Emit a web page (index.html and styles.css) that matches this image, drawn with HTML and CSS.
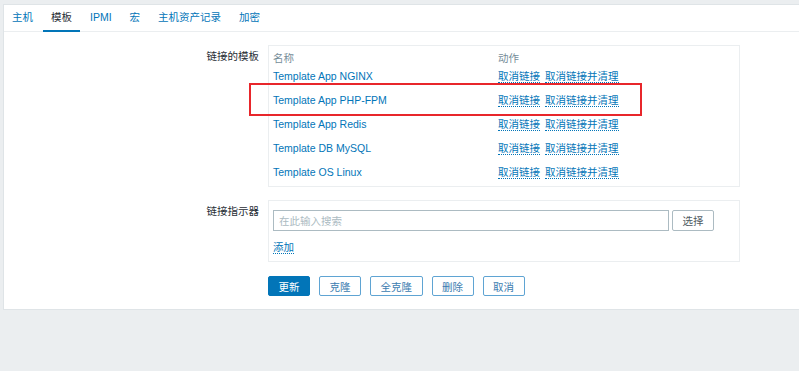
FILE: index.html
```html
<!DOCTYPE html>
<html lang="zh-CN">
<head>
    <meta charset="UTF-8">
    <title>主机 - 模板</title>
    <link rel="stylesheet" href="styles.css">
</head>
<body>

<div class="panel">
    <ul class="tabs">
        <li class="tab">主机</li>
        <li class="tab active">模板</li>
        <li class="tab">IPMI</li>
        <li class="tab">宏</li>
        <li class="tab">主机资产记录</li>
        <li class="tab">加密</li>
    </ul>

    <div class="form">
        <div class="form-label">链接的模板</div>
        <div class="form-box templates">
            <div class="trow thead">
                <span class="col-name">名称</span>
                <span class="col-action">动作</span>
            </div>
            <div class="trow">
                <a class="col-name link">Template App NGINX</a>
                <span class="col-action"><a class="action">取消链接</a><a class="action">取消链接并清理</a></span>
            </div>
            <div class="trow">
                <a class="col-name link">Template App PHP-FPM</a>
                <span class="col-action"><a class="action">取消链接</a><a class="action">取消链接并清理</a></span>
            </div>
            <div class="trow">
                <a class="col-name link">Template App Redis</a>
                <span class="col-action"><a class="action">取消链接</a><a class="action">取消链接并清理</a></span>
            </div>
            <div class="trow">
                <a class="col-name link">Template DB MySQL</a>
                <span class="col-action"><a class="action">取消链接</a><a class="action">取消链接并清理</a></span>
            </div>
            <div class="trow">
                <a class="col-name link">Template OS Linux</a>
                <span class="col-action"><a class="action">取消链接</a><a class="action">取消链接并清理</a></span>
            </div>
            <!-- highlight around the PHP-FPM row -->
            <div class="highlight"></div>
        </div>

        <div class="form-label">链接指示器</div>
        <div class="form-box linker">
            <div class="search-row">
                <input class="search" type="text" placeholder="在此输入搜索">
                <button class="btn-grey">选择</button>
            </div>
            <a class="action add">添加</a>
        </div>

        <div></div>
        <div class="buttons">
            <button class="btn primary">更新</button>
            <button class="btn">克隆</button>
            <button class="btn">全克隆</button>
            <button class="btn">删除</button>
            <button class="btn">取消</button>
        </div>
    </div>
</div>

</body>
</html>
```

FILE: styles.css
```css
body {
    margin: 0;
    padding: 4px 0 0 3px;
    background-color: #ebeef0;
    font-family: "Liberation Sans", "Noto Sans CJK SC", sans-serif;
    font-size: 10.5px;
    color: #1f2c33;
    overflow: hidden;
}
.panel {
    background-color: #fff;
    border: 1px solid #dfe4e7;
    border-right: none;
}
.tabs {
    display: flex;
    gap: 2px;
    list-style: none;
    margin: 0;
    padding: 0;
    height: 26px;
    border-bottom: 1px solid #ebeef0;
}
.tab {
    padding: 0 8px;
    line-height: 25px;
    height: 25px;
    color: #0275b8;
}
.tab.active {
    color: #1f2c33;
    border-bottom: 2px solid #0275b8; /* blue underline */
}
.form {
    display: grid;
    grid-template-columns: 255px 472px;
    column-gap: 9px;
    row-gap: 13px;
    padding: 13px 0 13px;
}
.form-label {
    text-align: right;
    padding-top: 5px;
    line-height: 12px;
}
.form-box {
    border: 1px solid #ebeef0;
    box-sizing: border-box;
}
.templates {
    position: relative;
    padding: 6px 4px 2px;
}
.trow {
    display: flex;
    height: 24px;
    align-items: center;
}
.trow.thead {
    height: 12px;
    line-height: 12px;
    color: #768d99;
}
.col-name {
    width: 225px;
}
.link {
    color: #0275b8;
}
.action {
    color: #0275b8;
    border-bottom: 1px dotted #0275b8;
    line-height: 12px;
    margin-right: 5px;
}
.highlight {
    position: absolute;
    left: -20px;
    top: 37px;
    width: 393px;
    height: 33px;
    box-sizing: border-box;
    border: 2px solid #e8262b;
}
.linker {
    padding: 9px 4px 7px;
}
.search-row {
    display: flex;
    gap: 3px;
}
.search {
    width: 396px;
    height: 21px;
    box-sizing: border-box;
    border: 1px solid #acbbc2;
    padding: 0 5px;
    font-family: inherit;
    font-size: 10.5px;
    outline: none;
}
.search::placeholder {
    color: #acbbc2;
}
.btn-grey {
    height: 21px;
    width: 42px;
    background-color: #fff;
    border: 1px solid #acbbc2;
    border-radius: 2px;
    font-family: inherit;
    font-size: 10.5px;
    color: #4f5b62;
    padding: 0;
}
.add {
    display: inline-block;
    margin-top: 10px;
}
.buttons {
    display: flex;
    gap: 9px;
    margin-top: 1px;
}
.btn {
    height: 20px;
    padding: 0 9.5px;
    background-color: #fff;
    border: 1px solid #5fa4d3;
    border-radius: 2px;
    color: #3b7cb0;
    font-family: inherit;
    font-size: 10.5px;
}
.btn.primary {
    background-color: #0275b8;
    border-color: #0275b8;
    color: #fff;
}
```
